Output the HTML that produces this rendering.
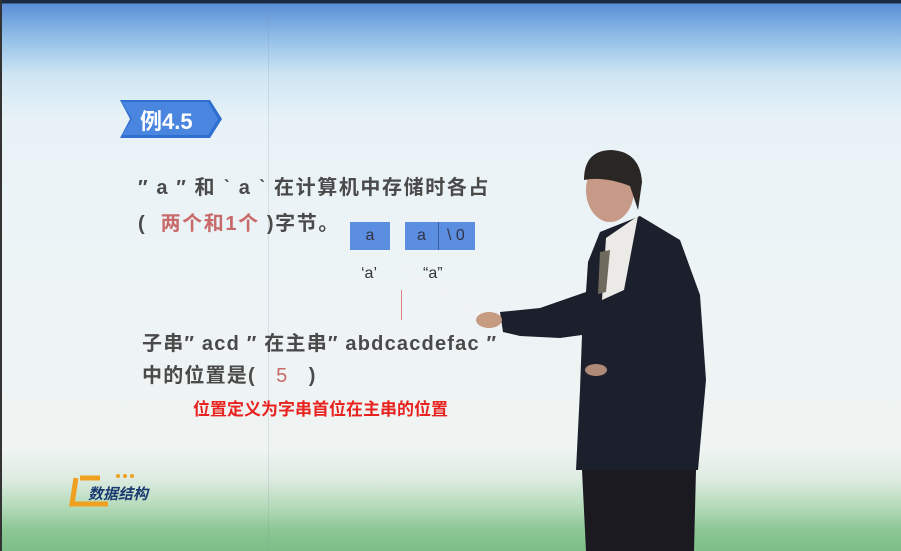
<!DOCTYPE html>
<html><head><meta charset="utf-8"><style>
body{margin:0;width:901px;height:551px;overflow:hidden;position:relative;font-family:"Liberation Sans","Noto Sans CJK SC",sans-serif;
background:linear-gradient(180deg,#1a2a44 0,#1a2a44 3px,#5a8fd8 4px,#8dbbe6 35px,#cfe6f4 75px,#e8f2f6 120px,#eef4f6 300px,#eff4f2 450px,#dcebe0 480px,#b7dcbc 505px,#8cc794 530px,#7dbe86 551px);}
.t{position:absolute;color:#4a4a4a;font-weight:bold;white-space:nowrap;letter-spacing:0}
</style></head><body>
<div style="position:absolute;left:0;top:0;width:2px;height:551px;background:#333"></div>
<div style="position:absolute;left:268px;top:4px;width:1px;height:547px;background:rgba(120,140,160,.2)"></div>
<svg style="position:absolute;left:118px;top:98px" width="106" height="42"><polygon points="2,2 92,2 104,21 92,40 2,40 12,21" fill="#2f6fd0"/><polygon points="4,4 90,4 100,21 90,37 4,37 14,21" fill="#4a86e0"/><text x="22" y="31" font-size="22" font-weight="bold" fill="#fff" font-family="Liberation Sans,Noto Sans CJK SC,sans-serif">例4.5</text></svg>
<div class="t" style="left:138px;top:171px;font-size:20px;letter-spacing:1.6px">″ a ″ 和 ˋ a ˋ 在计算机中存储时各占</div>
<div class="t" style="left:138px;top:207px;font-size:20px;letter-spacing:1.6px">(&nbsp; <span style="color:#c96a6a">两个和1个</span> )字节。</div>
<div style="position:absolute;left:350px;top:222px;width:40px;height:28px;background:#5b8ee0;color:#334;font-size:16px;text-align:center;line-height:28px">a</div>
<div style="position:absolute;left:405px;top:222px;width:70px;height:28px;background:#5b8ee0;color:#334;font-size:16px;line-height:28px"><span style="display:inline-block;width:33px;text-align:center;border-right:1px solid #3a5fa0">a</span><span style="padding-left:8px">\ 0</span></div>
<div class="t" style="left:361px;top:265px;font-size:16px;font-weight:normal;color:#333">‘a’</div>
<div class="t" style="left:423px;top:265px;font-size:16px;font-weight:normal;color:#333">“a”</div>
<div style="position:absolute;left:401px;top:290px;width:1px;height:30px;background:#e08080"></div>
<div class="t" style="left:142px;top:327px;font-size:20px;letter-spacing:1.2px">子串″ acd ″ 在主串″ abdcacdefac ″</div>
<div class="t" style="left:142px;top:359px;font-size:20px;letter-spacing:1.2px">中的位置是( &nbsp; <span style="color:#c96a6a;font-weight:normal">5</span> &nbsp; )</div>
<div class="t" style="left:193px;top:395px;font-size:17px;color:#e8231f">位置定义为字串首位在主串的位置</div>
<svg style="position:absolute;left:68px;top:470px" width="100" height="40"><path d="M12,8 H32 M8,8 L4,34 H40" stroke="#f0a020" stroke-width="5" fill="none"/><text x="20" y="29" font-size="15" font-weight="bold" font-style="italic" fill="#1a3a70" font-family="Noto Sans CJK SC,sans-serif">数据结构</text><circle cx="50" cy="6" r="2" fill="#f0a020"/><circle cx="57" cy="6" r="2" fill="#f0a020"/><circle cx="64" cy="6" r="2" fill="#f0a020"/></svg>
<svg style="position:absolute;left:0;top:0" width="901" height="551">
<line x1="404" y1="268" x2="488" y2="320" stroke="#f4f4f4" stroke-width="2"/>
<polygon points="600,232 640,216 680,240 700,295 706,380 698,470 576,470 580,390 582,335 560,338 520,336 503,332 500,312 540,308 586,292 588,262" fill="#1c1f2c"/>
<polygon points="582,470 696,470 694,551 586,551" fill="#1a1a20"/>
<polygon points="606,238 638,216 624,290 602,300" fill="#eceae6"/>
<polygon points="600,252 610,250 606,292 598,294" fill="#6e6a5e"/>
<ellipse cx="489" cy="320" rx="13" ry="8" fill="#c79a82"/>
<ellipse cx="596" cy="370" rx="11" ry="6" fill="#b08a78"/>
<ellipse cx="610" cy="190" rx="24" ry="32" fill="#c69a86"/>
<path d="M584,180 Q584,150 612,150 Q640,152 642,182 L638,210 L630,186 Q604,176 584,180Z" fill="#2a2624"/>
</svg>
</body></html>
